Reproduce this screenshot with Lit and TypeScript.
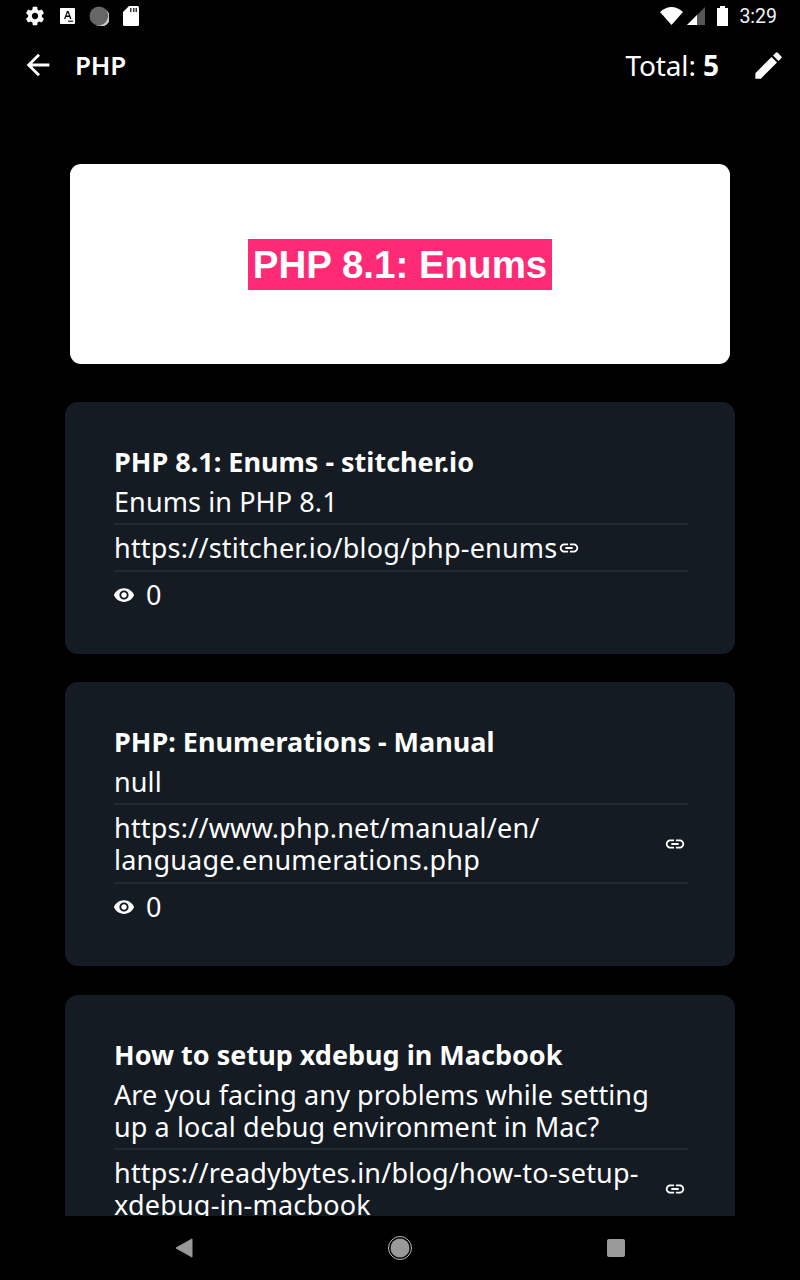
import { LitElement, html, css } from "lit";
import { customElement } from "lit/decorators.js";

const linkIcon = html`<svg class="link" viewBox="0 0 24 24"><path fill="currentColor" d="M3.9 12c0-1.71 1.39-3.1 3.1-3.1h4V7H7c-2.76 0-5 2.24-5 5s2.24 5 5 5h4v-1.9H7c-1.71 0-3.1-1.39-3.1-3.1zM8 13h8v-2H8v2zm9-6h-4v1.9h4c1.71 0 3.1 1.39 3.1 3.1s-1.39 3.1-3.1 3.1h-4V17h4c2.76 0 5-2.24 5-5s-2.24-5-5-5z"/></svg>`;
const eyeIcon = html`<svg class="eye" viewBox="0 0 24 24"><path fill="currentColor" d="M12 4.500C7 4.500 2.730 7.610 1 12c1.730 4.390 6 7.500 11 7.500s9.270-3.110 11-7.500c-1.730-4.390-6-7.500-11-7.500zM12 17c-2.760 0-5-2.240-5-5s2.240-5 5-5 5 2.240 5 5-2.240 5-5 5zm0-8c-1.660 0-3 1.340-3 3s1.340 3 3 3 3-1.340 3-3-1.340-3-3-3z"/></svg>`;

interface Item { title: string; desc: string; url: string; inline?: boolean; views?: number }
const items: Item[] = [
  { title: "PHP 8.1: Enums - stitcher.io", desc: "Enums in PHP 8.1", url: "https://stitcher.io/blog/php-enums", inline: true, views: 0 },
  { title: "PHP: Enumerations - Manual", desc: "null", url: "https://www.php.net/manual/en/ language.enumerations.php", views: 0 },
  { title: "How to setup xdebug in Macbook", desc: "Are you facing any problems while setting\nup a local debug environment in Mac?", url: "https://readybytes.in/blog/how-to-setup-xdebug-in-macbook", views: 0 },
];

@customElement("app-root")
export class AppRoot extends LitElement {
  static styles = css`
    :host { display: block; width: 800px; height: 1280px; background: #000; color: #fff; font-family: "Noto Sans", sans-serif; overflow: hidden; }
    .page { display: flex; flex-direction: column; height: 1280px; }
    .status { height: 32px; flex: none; display: flex; align-items: center; padding: 0 23px 0 24px; }
    .status .left { display: flex; align-items: center; gap: 14px; }
    .status .right { margin-left: auto; display: flex; align-items: center; }
    .signal { margin-left: 4px; }
    .battery { margin-left: 12px; }
    .clock { font: 19.5px "Roboto", sans-serif; color: #f2f2f2; margin-left: 11px; }
    .toolbar { height: 66px; flex: none; display: flex; align-items: center; padding: 0 14.5px 0 20.5px; }
    .back { width: 34px; height: 34px; }
    .title { font-size: 26px; font-weight: 600; margin-left: 20.5px; letter-spacing: -0.2px; }
    .total { margin-left: auto; font-size: 28px; letter-spacing: -0.1px; }
    .total b { font-weight: 700; }
    .edit { width: 35px; height: 35px; margin-left: 31.5px; }
    .scroll { flex: 1; min-height: 0; overflow: hidden; padding-top: 66px; }
    .hero { margin: 0 70px; height: 200px; background: #fff; border-radius: 11px; display: flex; align-items: center; justify-content: center; }
    .hero span { font: 700 38.5px/51px "Liberation Sans", sans-serif; background: #ff2a75; color: #fff; padding: 0 4.8px; }
    .cards { margin: 38px 65px 0; display: flex; flex-direction: column; gap: 28.4px; }
    .card { background: #141b22; border-radius: 13px; padding: 45px 47px 43px 49px; font-size: 27px; letter-spacing: 0.1px; }
    .t { line-height: 30px; font-weight: 700; margin-bottom: 9px; letter-spacing: 0; }
    .d { line-height: 32px; padding-bottom: 5px; white-space: pre-line; }
    .row { display: flex; align-items: center; border-top: 2px solid #22292f; line-height: 32px; padding: 7px 0 6px; letter-spacing: 0.2px; }
    .row .u { flex: 1; }
    .row.inline .u { flex: none; }
    .link { width: 22px; height: 22px; flex: none; margin-left: 1px; }
    .row:not(.inline) .link { margin: 0 2px 0 0; }
    .views { display: flex; align-items: center; gap: 11px; border-top: 2px solid #22292f; line-height: 32px; padding-top: 7px; }
    .eye { width: 22px; height: 22px; margin-left: -1px; }
    .nav { height: 64px; flex: none; display: flex; align-items: center; justify-content: space-between; padding: 0 175px; background: #000; }
    .nav svg { display: block; }
  `;
  render() {
    return html`<div class="page">
      <div class="status">
        <div class="left">
          <svg width="22" height="22" viewBox="0 0 24 24"><path fill="#fff" d="M19.430 12.980c.040-.320.070-.640.070-.980s-.030-.660-.070-.980l2.110-1.650c.190-.150.240-.420.120-.640l-2-3.460c-.120-.220-.390-.300-.610-.220l-2.490 1c-.520-.400-1.080-.730-1.690-.980l-.380-2.650C14.460 2.180 14.250 2 14 2h-4c-.250 0-.460.180-.490.420l-.380 2.650c-.610.250-1.170.590-1.690.980l-2.490-1c-.230-.090-.490 0-.610.220l-2 3.460c-.130.220-.070.490.120.640l2.110 1.650c-.040.320-.070.650-.070.980s.030.660.07.980l-2.110 1.650c-.190.150-.240.420-.120.640l2 3.460c.120.220.390.300.610.220l2.490-1c.520.400 1.080.730 1.690.980l.380 2.650c.030.240.240.420.490.420h4c.250 0 .460-.180.490-.420l.380-2.650c.610-.250 1.170-.590 1.690-.980l2.490 1c.230.090.490 0 .610-.220l2-3.460c.120-.220.070-.490-.120-.640l-2.110-1.650zM12 15.500c-1.930 0-3.500-1.570-3.500-3.500s1.570-3.500 3.500-3.500 3.500 1.570 3.500 3.500-1.570 3.500-3.500 3.500z"/></svg>
          <svg width="15" height="16" viewBox="0 0 15 16"><rect width="15" height="16" rx="1" fill="#fff"/><path d="M4 11 7 3h1.500l3 8H10l-.6-2H6l-.6 2zM6.500 7.600h2.500L7.800 4.400z" fill="#000"/><rect x="8" y="12.500" width="5" height="1.500" fill="#444"/></svg>
          <svg width="20" height="20" viewBox="0 0 20 20"><circle cx="10" cy="10" r="9.500" fill="#666"/><path d="M17 4a9.500 9.500 0 0 1-10 15A9 9 0 0 0 17 4" fill="#ccc"/></svg>
          <svg width="16" height="20" viewBox="0 0 16 20"><path fill="#fff" d="M6 0h8.500A1.500 1.500 0 0 1 16 1.500v17a1.500 1.500 0 0 1-1.500 1.500h-13A1.500 1.500 0 0 1 0 18.500V6z"/><path fill="#333" d="M7 2h1.500v4H7zM10 2h1.500v4H10zM12.500 2H14v4h-1.500z"/></svg>
        </div>
        <div class="right">
          <svg width="23" height="18" viewBox="0 0 23 18"><path fill="#fff" d="M0 5Q11.500-5 23 5L11.500 18z"/></svg>
          <svg class="signal" width="18" height="18" viewBox="0 0 18 18"><path fill="#555" d="M18 0v18H0z"/><path fill="#fff" d="M10 8v10H0z"/></svg>
          <svg class="battery" width="11" height="20" viewBox="0 0 11 20"><path fill="#fff" d="M3 0h5v2h3v18H0V2h3z"/></svg>
          <span class="clock">3:29</span>
        </div>
      </div>
      <div class="toolbar">
        <svg class="back" viewBox="0 0 24 24"><path fill="#fff" d="M20 11H7.830l5.590-5.590L12 4l-8 8 8 8 1.410-1.410L7.830 13H20v-2z"/></svg>
        <span class="title">PHP</span>
        <span class="total">Total: <b>5</b></span>
        <svg class="edit" viewBox="0 0 24 24"><path fill="#fff" d="M3 17.250V21h3.750L17.810 9.940l-3.750-3.750L3 17.250zM20.710 7.040a1 1 0 0 0 0-1.410l-2.340-2.340a1 1 0 0 0-1.410 0l-1.830 1.830 3.750 3.750 1.830-1.830z"/></svg>
      </div>
      <div class="scroll">
        <div class="hero"><span>PHP 8.1: Enums</span></div>
        <div class="cards">
          ${items.map(i => html`<div class="card">
            <div class="t">${i.title}</div>
            <div class="d">${i.desc}</div>
            <div class="row ${i.inline ? "inline" : ""}"><span class="u">${i.url}</span>${linkIcon}</div>
            <div class="views">${eyeIcon}<span>${i.views}</span></div>
          </div>`)}
        </div>
      </div>
      <div class="nav">
        <svg width="18" height="20" viewBox="0 0 18 20"><path fill="#999" d="M17 1v18L1 10z" stroke="#999" stroke-linejoin="round"/></svg>
        <svg width="24" height="24" viewBox="0 0 24 24"><circle cx="12" cy="12" r="11.500" fill="none" stroke="#bbb"/><circle cx="12" cy="12" r="9.500" fill="#999"/></svg>
        <svg width="18" height="18" viewBox="0 0 18 18"><rect width="18" height="18" rx="2" fill="#999"/></svg>
      </div>
    </div>`;
  }
}
